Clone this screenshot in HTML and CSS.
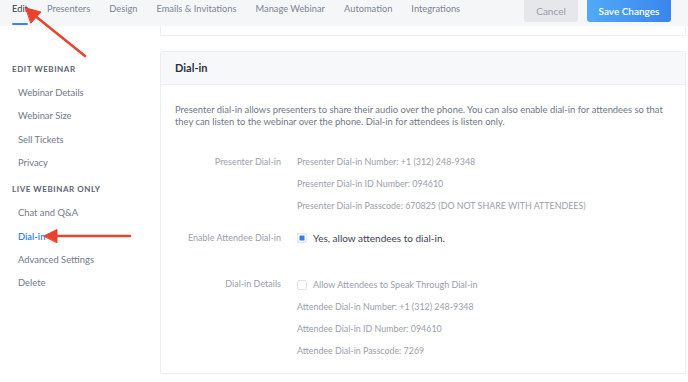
FILE: index.html
```html
<!DOCTYPE html>
<html lang="en">
<head>
  <meta charset="UTF-8">
  <meta name="viewport" content="width=device-width, initial-scale=1.0">
  <title>Edit Webinar - Dial-in</title>
  <link rel="stylesheet" href="styles.css">
</head>
<body>
  <header class="topbar">
    <nav class="tabs">
      <a class="tab active" href="#">Edit</a>
      <a class="tab" href="#">Presenters</a>
      <a class="tab" href="#">Design</a>
      <a class="tab" href="#">Emails &amp; Invitations</a>
      <a class="tab" href="#">Manage Webinar</a>
      <a class="tab" href="#">Automation</a>
      <a class="tab" href="#">Integrations</a>
    </nav>
    <div class="actions">
      <button class="btn btn-cancel">Cancel</button>
      <button class="btn btn-save">Save Changes</button>
    </div>
  </header>

  <div class="layout">
    <aside class="sidebar">
      <h4 class="side-title">EDIT WEBINAR</h4>
      <a class="side-link" href="#">Webinar Details</a>
      <a class="side-link" href="#">Webinar Size</a>
      <a class="side-link" href="#">Sell Tickets</a>
      <a class="side-link" href="#">Privacy</a>
      <h4 class="side-title live">LIVE WEBINAR ONLY</h4>
      <a class="side-link" href="#">Chat and Q&amp;A</a>
      <a class="side-link current" href="#">Dial-in</a>
      <a class="side-link" href="#">Advanced Settings</a>
      <a class="side-link" href="#">Delete</a>
    </aside>

    <main class="content">
      <div class="card card-prev"></div>

      <section class="card">
        <div class="card-header">Dial-in</div>
        <div class="card-body">
          <p class="intro">Presenter dial-in allows presenters to share their audio over the phone. You can also enable dial-in for attendees so that they can listen to the webinar over the phone. Dial-in for attendees is listen only.</p>

          <div class="row">
            <div class="row-label">Presenter Dial-in</div>
            <div class="row-values">
              <div class="value">Presenter Dial-in Number: +1 (312) 248-9348</div>
              <div class="value">Presenter Dial-in ID Number: 094610</div>
              <div class="value">Presenter Dial-in Passcode: 670825 (DO NOT SHARE WITH ATTENDEES)</div>
            </div>
          </div>

          <div class="row row-enable">
            <div class="row-label">Enable Attendee Dial-in</div>
            <div class="row-values">
              <label class="check checked"><span class="box"></span>Yes, allow attendees to dial-in.</label>
            </div>
          </div>

          <div class="row row-details">
            <div class="row-label">Dial-in Details</div>
            <div class="row-values">
              <label class="check"><span class="box"></span>Allow Attendees to Speak Through Dial-in</label>
              <div class="value">Attendee Dial-in Number: +1 (312) 248-9348</div>
              <div class="value">Attendee Dial-in ID Number: 094610</div>
              <div class="value">Attendee Dial-in Passcode: 7269</div>
            </div>
          </div>
        </div>
      </section>
    </main>
  </div>

  <!-- annotation arrows -->
  <svg class="arrows" width="688" height="382" viewBox="0 0 688 382">
    <g stroke="#e8432d" stroke-width="2.5" stroke-linecap="round" fill="#e8432d">
      <line x1="85" y1="56" x2="34" y2="15"/>
      <polygon points="26,8 41,12 31,23" stroke-width="1" stroke-linejoin="round"/>
      <line x1="130" y1="236" x2="54" y2="236"/>
      <polygon points="44,236 57,229.5 57,242.5" stroke-width="1" stroke-linejoin="round"/>
    </g>
  </svg>
</body>
</html>
```

FILE: styles.css
```css
* {
  box-sizing: border-box;
}

body {
  margin: 0;
  font-family: Lato, "Open Sans", Arial, sans-serif;
  font-size: 10px;
  color: #6b7280;
  background: #ffffff;
  position: relative;
  width: 688px;
  height: 382px;
  overflow: hidden;
}

a {
  text-decoration: none;
}

.topbar {
  height: 26px;
  background: #f5f6f8;
  display: flex;
  justify-content: space-between;
  padding: 0 17px 0 12px;
}

.tabs {
  display: flex;
  gap: 19px;
}

.tab {
  color: #7d8594;
  line-height: 18px;
  font-size: 9.3px;
  height: 26px;
}

.tab.active {
  color: #323845;
  position: relative;
}

.tab.active::after {
  content: "";
  position: absolute;
  left: 0;
  right: 0;
  top: 23px;
  height: 2px;
  border-radius: 1px;
  background: #3b82f6;
}

.actions {
  display: flex;
  gap: 9px;
}

.btn {
  height: 22px;
  border: none;
  border-radius: 0 0 3px 3px;
  font-family: inherit;
  font-size: 10px;
  padding: 0;
}

.btn-cancel {
  width: 54px;
  background: #e5e7ea;
  color: #979ca6;
}

.btn-save {
  width: 84px;
  background: linear-gradient(90deg, #52aaf6, #3a85ee);
  color: #ffffff;
  font-weight: 600;
}

.layout {
  display: flex;
}

.sidebar {
  width: 160px;
  flex-shrink: 0;
  padding: 38px 0 0 12px;
  display: flex;
  flex-direction: column;
}

.side-title {
  margin: 0 0 7px;
  font-size: 8px;
  font-weight: 700;
  letter-spacing: 0.55px;
  color: #5c6372;
  line-height: 10px;
}

.side-title.live {
  margin-top: 10px;
  margin-bottom: 7px;
}

.side-link {
  display: block;
  padding-left: 6px;
  color: #717888;
  font-size: 9.4px;
  line-height: 23.33px;
}

.side-link.current {
  color: #2f80ed;
  font-weight: 600;
}

.content {
  flex: 1;
  padding-right: 2px;
}

.card {
  border: 1px solid #eceef1;
  border-radius: 2px;
  background: #ffffff;
}

.card-prev {
  height: 10px;
  border-top: none;
  border-radius: 0 0 2px 2px;
  margin-bottom: 15px;
}

.card-header {
  height: 33px;
  line-height: 32px;
  padding-left: 14px;
  background: #f7f8fa;
  border-bottom: 1px solid #eceef1;
  font-size: 11px;
  font-weight: 700;
  color: #2c3240;
}

.card-body {
  padding: 19px 10px 11px 14px;
}

.intro {
  margin: 0 0 23px;
  line-height: 12px;
  font-size: 9.4px;
  color: #707786;
}

.row {
  display: flex;
  gap: 16px;
}

.row-enable {
  margin-top: 10px;
}

.row-details {
  margin-top: 24px;
}

.row-label {
  width: 106px;
  flex-shrink: 0;
  text-align: right;
  line-height: 22px;
  color: #9aa0aa;
  font-size: 9px;
}

.row-values {
  display: flex;
  flex-direction: column;
}

.value {
  line-height: 22px;
  color: #9aa0aa;
  font-size: 8.9px;
}

.check {
  display: flex;
  align-items: center;
  height: 23px;
  color: #9aa0aa;
  font-size: 9px;
}

.check .box {
  width: 10px;
  height: 10px;
  border: 1px solid #dfe2e6;
  border-radius: 2px;
  margin-right: 6px;
  background: #ffffff;
}

.check.checked {
  height: 22px;
  color: #3d4351;
  font-size: 10px;
}

.check.checked .box {
  border-color: #e4e7eb;
  background: #2f80ed;
  box-shadow: inset 0 0 0 1.5px #ffffff;
}

.arrows {
  position: absolute;
  left: 0;
  top: 0;
  pointer-events: none;
}
```
